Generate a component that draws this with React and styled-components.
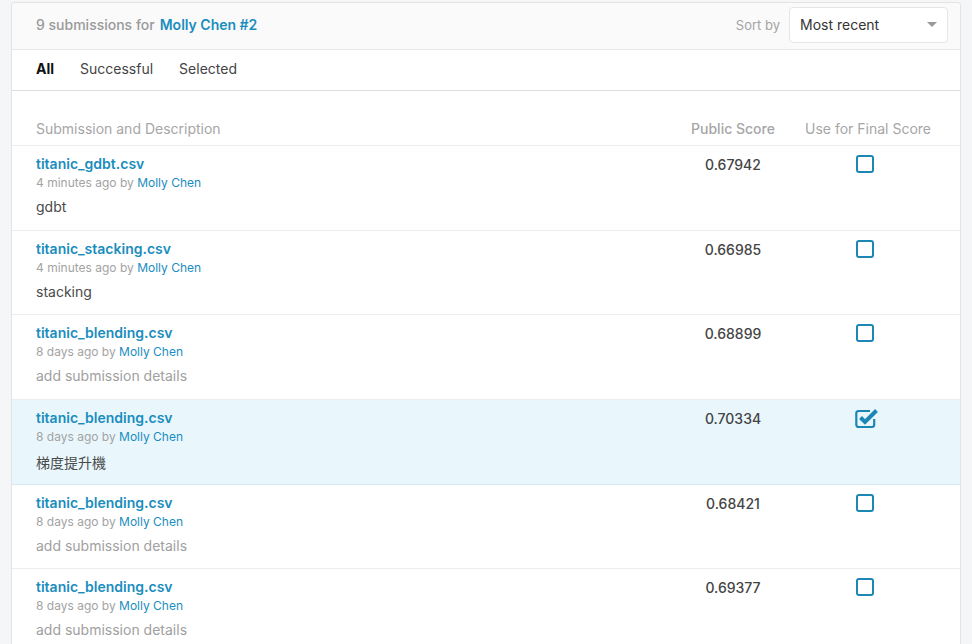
import React from 'react';
import styled, { createGlobalStyle } from 'styled-components';

const GlobalStyle = createGlobalStyle`
  html, body {
    margin: 0;
    padding: 0;
    background: #f4f6f7;
    font-family: Inter, "Noto Sans CJK TC", Arial, sans-serif;
  }
`;

const Page = styled.div`
  padding: 2px 11px 0 11px;
`;

const Panel = styled.div`
  background: #fff;
  border: 1px solid #e3e3e3;
  border-bottom: none;
  border-radius: 4px 4px 0 0;
  overflow: hidden;
`;

const Header = styled.div`
  display: flex;
  align-items: center;
  justify-content: space-between;
  height: 46px;
  padding: 0 12px 0 24px;
  background: #fafafa;
  border-bottom: 1px solid #e9e9e9;
`;

const Title = styled.div`
  font-size: 14px;
  font-weight: 500;
  color: #999;
  margin-top: -3px;
  span {
    color: #1a8dbe;
    font-weight: 600;
    margin-left: 5px;
  }
`;

const SortBox = styled.div`
  display: flex;
  align-items: center;
  gap: 9px;
  font-size: 13px;
  color: #a3a3a3;
  margin-top: -2px;
`;

const Select = styled.div`
  display: flex;
  align-items: center;
  justify-content: space-between;
  width: 137px;
  height: 33px;
  padding: 0 10px 1px 10px;
  background: #fff;
  border: 1px solid #e6e6e6;
  border-radius: 4px;
  font-size: 14px;
  color: #333;
`;

const Caret = styled.span`
  width: 0;
  height: 0;
  border-left: 5px solid transparent;
  border-right: 5px solid transparent;
  border-top: 5px solid #999;
`;

const Tabs = styled.div`
  display: flex;
  gap: 26px;
  align-items: center;
  box-sizing: border-box;
  height: 41px;
  padding: 0 24px 4px;
  border-bottom: 1px solid #dedede;
`;

const Tab = styled.div`
  font-size: 14px;
  color: ${p => (p.active ? '#111' : '#444')};
  font-weight: ${p => (p.active ? 700 : 400)};
`;

const Grid = styled.div`
  display: grid;
  grid-template-columns: 1fr 134px 136px;
  padding: 0 24px;
`;

const HeadRow = styled(Grid)`
  padding-top: 29px;
  height: 25px;
  border-bottom: 1px solid #ececec;
  font-size: 14px;
  color: #a6a6a6;
`;

const HeadCell = styled.div`
  text-align: ${p => (p.center ? 'center' : 'left')};
  font-weight: ${p => (p.bold ? 500 : 400)};
  white-space: nowrap;
`;

const Row = styled(Grid)`
  height: 83.7px;
  border-bottom: 1px solid ${p => (p.selected ? '#d5e9f1' : '#ececec')};
  background: ${p => (p.selected ? '#e9f7fd' : '#fff')};
`;

const Info = styled.div`
  padding-top: 9px;
`;

const FileName = styled.div`
  font-size: 14px;
  font-weight: 600;
  color: #1a8dbe;
  line-height: 18px;
`;

const Meta = styled.div`
  font-size: 12px;
  color: #a3a3a3;
  line-height: 19px;
  span {
    color: #1a8dbe;
  }
`;

const Desc = styled.div`
  margin-top: 6px;
  font-size: 14px;
  color: ${p => (p.placeholder ? '#a0a0a0' : '#4a4a4a')};
`;

const Score = styled.div`
  padding-top: 10px;
  text-align: center;
  font-size: 14px;
  font-weight: 500;
  color: #444;
`;

const CheckCell = styled.div`
  display: flex;
  justify-content: center;
  padding-top: 9px;
  padding-right: 6px;
`;

const Box = styled.div`
  width: 14px;
  height: 14px;
  border: 2px solid #1c87b5;
  border-radius: 3px;
`;

const CheckIcon = styled.svg`
  margin-top: -3px;
  margin-left: 6px;
`;

const CheckedBox = () => (
  <CheckIcon width="26" height="23" viewBox="0 0 26 23">
    <path d="M15 5 H3.5 A2.2 2.2 0 0 0 1.3 7.2 V18.8 A2.2 2.2 0 0 0 3.5 21 H17 A2.2 2.2 0 0 0 19.2 18.8 V13" fill="none" stroke="#1c87b5" strokeWidth="2.2" />
    <path d="M5.5 11.5 L10 16 L21.5 4.5" fill="none" stroke="#1c87b5" strokeWidth="4" />
  </CheckIcon>
);

const rows = [
  { file: 'titanic_gdbt.csv', ago: '4 minutes ago', desc: 'gdbt', score: '0.67942' },
  { file: 'titanic_stacking.csv', ago: '4 minutes ago', desc: 'stacking', score: '0.66985' },
  { file: 'titanic_blending.csv', ago: '8 days ago', desc: null, score: '0.68899' },
  { file: 'titanic_blending.csv', ago: '8 days ago', desc: '梯度提升機', score: '0.70334', selected: true },
  { file: 'titanic_blending.csv', ago: '8 days ago', desc: null, score: '0.68421' },
  { file: 'titanic_blending.csv', ago: '8 days ago', desc: null, score: '0.69377' },
];

export default function App() {
  return (
    <>
      <GlobalStyle />
      <Page>
        <Panel>
          <Header>
            <Title>
              9 submissions for<span>Molly Chen #2</span>
            </Title>
            <SortBox>
              Sort by
              <Select>
                Most recent
                <Caret />
              </Select>
            </SortBox>
          </Header>
          <Tabs>
            <Tab active>All</Tab>
            <Tab>Successful</Tab>
            <Tab>Selected</Tab>
          </Tabs>
          <HeadRow>
            <HeadCell>Submission and Description</HeadCell>
            <HeadCell center bold>Public Score</HeadCell>
            <HeadCell center>Use for Final Score</HeadCell>
          </HeadRow>
          {rows.map((r, i) => (
            <Row key={i} selected={r.selected}>
              <Info>
                <FileName>{r.file}</FileName>
                <Meta>
                  {r.ago} by <span>Molly Chen</span>
                </Meta>
                <Desc placeholder={!r.desc}>{r.desc || 'add submission details'}</Desc>
              </Info>
              <Score>{r.score}</Score>
              <CheckCell>{r.selected ? <CheckedBox /> : <Box />}</CheckCell>
            </Row>
          ))}
        </Panel>
      </Page>
    </>
  );
}
